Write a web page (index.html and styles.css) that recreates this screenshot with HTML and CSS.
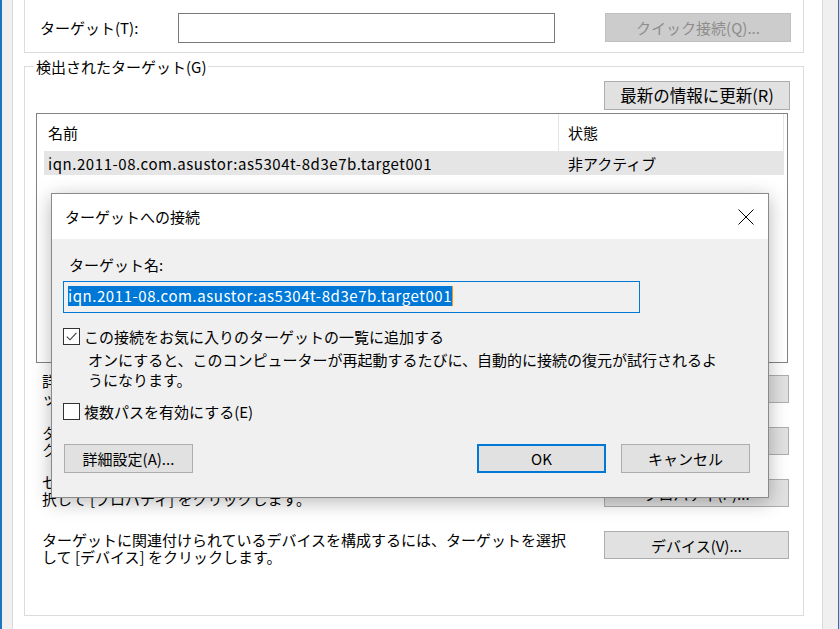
FILE: index.html
```html
<!DOCTYPE html>
<html lang="ja">
<head>
<meta charset="utf-8">
<title>iSCSI イニシエーターのプロパティ</title>
<link rel="stylesheet" href="styles.css">
</head>
<body>
<div class="frame">
  <div class="panel">
    <div class="group group-quick">
      <span class="quick-label">ターゲット(T):</span>
      <div class="textbox quick-input"></div>
      <button class="btn btn-disabled quick-btn">クイック接続(Q)...</button>
    </div>
    <fieldset class="group group-found">
      <legend>検出されたターゲット(G)</legend>
      <div class="found-body">
        <div class="refresh-row"><button class="btn btn-refresh">最新の情報に更新(R)</button></div>
        <div class="listview">
          <div class="lv-header">
            <div class="col col-name">名前</div>
            <div class="col col-state">状態</div>
          </div>
          <div class="lv-row selected">
            <div class="col col-name latin">iqn.2011-08.com.asustor:as5304t-8d3e7b.target001</div>
            <div class="col col-state">非アクティブ</div>
          </div>
        </div>
        <div class="actions">
          <div class="action">
            <p class="action-text">詳細オプションを使用して接続するには、ターゲットを選択して [接続] をクリ<br>ックします。</p>
            <button class="btn btn-action">接続(N)</button>
          </div>
          <div class="action">
            <p class="action-text">ターゲットを完全に切断するには、ターゲットを選択して [切断] を<br>クリックします。</p>
            <button class="btn btn-action">切断(D)</button>
          </div>
          <div class="action action-props">
            <p class="action-text">セッションの構成など、ターゲットのプロパティを表示するには、ターゲットを選<br>択して [プロパティ] をクリックします。</p>
            <button class="btn btn-action">プロパティ(P)...</button>
          </div>
          <div class="action action-devices">
            <p class="action-text">ターゲットに関連付けられているデバイスを構成するには、ターゲットを選択<br>して [デバイス] をクリックします。</p>
            <button class="btn btn-action">デバイス(V)...</button>
          </div>
        </div>
      </div>
    </fieldset>
  </div>
</div>

<div class="dialog">
  <div class="dlg-title">
    <span class="dlg-title-text">ターゲットへの接続</span>
    <svg class="dlg-close" width="16" height="16" viewBox="0 0 16 16" aria-hidden="true">
      <path d="M0.5 0.5 L15.5 15.5 M15.5 0.5 L0.5 15.5" stroke="#000" stroke-width="1" fill="none"/>
    </svg>
  </div>
  <div class="dlg-body">
    <div class="dlg-label">ターゲット名:</div>
    <div class="dlg-input"><span class="selection latin">iqn.2011-08.com.asustor:as5304t-8d3e7b.target001</span></div>
    <div class="check-row check-first">
      <span class="checkbox">
        <svg width="15" height="15" viewBox="0 0 15 15" aria-hidden="true">
          <path d="M2.8 7.6 L6 10.8 L12.4 3.8" stroke="#3a3a3a" stroke-width="1.1" fill="none"/>
        </svg>
      </span>
      <span class="check-label">この接続をお気に入りのターゲットの一覧に追加する</span>
    </div>
    <p class="check-desc">オンにすると、このコンピューターが再起動するたびに、自動的に接続の復元が試行されるよ<br>うになります。</p>
    <div class="check-row check-second">
      <span class="checkbox"></span>
      <span class="check-label">複数パスを有効にする(E)</span>
    </div>
    <div class="dlg-buttons">
      <button class="btn dlg-btn">詳細設定(A)...</button>
      <button class="btn dlg-btn btn-default">OK</button>
      <button class="btn dlg-btn btn-cancel">キャンセル</button>
    </div>
  </div>
</div>
</body>
</html>
```

FILE: styles.css
```css
* {
  box-sizing: border-box;
}

html,
body {
  margin: 0;
  padding: 0;
}

body {
  position: relative;
  width: 839px;
  height: 629px;
  overflow: hidden;
  background: #f0f0f0;
  color: #000;
  font-family: "Noto Sans CJK JP", "Noto Sans", sans-serif;
  font-size: 15px;
  line-height: 17px;
}

.latin {
  letter-spacing: 0.56px;
}

/* window frame */
.frame {
  display: flex;
  height: 629px;
  padding: 0 15px 0 10px;
  background: #f0f0f0;
  border-left: 2px solid #1c76bf;
  border-right: 1px solid #1c76bf;
}

.panel {
  flex: 1;
  padding: 0 18px 0 11px;
  background: #fff;
  border-left: 1px solid #d9d9d9;
  border-right: 1px solid #d9d9d9;
}

/* buttons */
.btn {
  display: flex;
  align-items: center;
  justify-content: center;
  padding: 0;
  margin: 0;
  font: inherit;
  color: #000;
  background: #e1e1e1;
  border: 1px solid #adadad;
  white-space: nowrap;
}

.btn-disabled {
  background: #cccccc;
  border-color: #bfbfbf;
  color: #8d8d8d;
}

/* quick connect group */
.group-quick {
  display: flex;
  align-items: flex-start;
  height: 53px;
  padding: 13px 12px 0 15px;
  border: 1px solid #dcdcdc;
  border-top: none;
}

.quick-label {
  width: 138px;
  line-height: 30px;
  white-space: nowrap;
}

.quick-input {
  width: 377px;
  height: 30px;
  background: #fff;
  border: 1px solid #7a7a7a;
}

.quick-btn {
  width: 186px;
  height: 29px;
  margin-left: auto;
}

/* discovered targets group */
.group-found {
  min-width: 0;
  height: 558px;
  margin: 5px 0 0;
  padding: 0;
  border: 1px solid #dcdcdc;
}

.group-found legend {
  margin-left: 9px;
  padding: 0 2px;
  line-height: 17px;
}

.found-body {
  padding: 6px 13px 0 11px;
}

.refresh-row {
  display: flex;
  justify-content: flex-end;
}

.btn-refresh {
  width: 186px;
  height: 29px;
  font-size: 16.5px;
}

.listview {
  height: 250px;
  margin: 3px 2px 0 0;
  padding: 0 3px 0 7px;
  background: #fff;
  border: 1px solid #828282;
}

.lv-header,
.lv-row {
  display: flex;
}

.lv-header {
  height: 37px;
  align-items: center;
}

.lv-row {
  height: 24px;
  align-items: center;
}

.lv-row.selected {
  background: #e5e5e5;
}

.col {
  white-space: nowrap;
}

.col-name {
  width: 515px;
  padding-left: 4px;
}

.col-state {
  flex: 1;
  padding-left: 9px;
}

.lv-header .col {
  height: 100%;
  display: flex;
  align-items: center;
}

.lv-header .col-name,
.lv-header .col-state {
  border-right: 1px solid #e5e5e5;
}

.actions {
  display: flex;
  flex-direction: column;
  gap: 18px;
  margin-top: 9px;
}

.action {
  display: flex;
  align-items: center;
  height: 34px;
}

.action-text {
  margin: 0;
  padding-left: 6px;
  white-space: nowrap;
  line-height: 17px;
}

.action-props .action-text {
  margin-top: -7px;
}

.action-devices .action-text {
  margin-top: 6px;
}

.btn-action {
  width: 185px;
  height: 28px;
  margin-left: auto;
  margin-right: 1px;
}

/* modal dialog */
.dialog {
  position: absolute;
  left: 51px;
  top: 193px;
  width: 718px;
  height: 305px;
  display: flex;
  flex-direction: column;
  background: #f0f0f0;
  border: 1px solid #8a8a8a;
  box-shadow: 0 4px 18px rgba(0, 0, 0, 0.28);
}

.dlg-title {
  display: flex;
  align-items: center;
  justify-content: space-between;
  height: 45px;
  padding: 0 14px 0 13px;
  background: #fff;
}

.dlg-close {
  display: block;
}

.dlg-body {
  flex: 1;
  padding: 17px 18px 0 11px;
}

.dlg-label {
  padding-left: 6px;
}

.dlg-input {
  width: 577px;
  height: 32px;
  margin-top: 8px;
  padding: 4px 0 0 4px;
  background: #f0f0f0;
  border: 1px solid #0078d7;
}

.selection {
  display: inline-block;
  line-height: 20px;
  color: #fff;
  background: #0078d7;
  border-right: 1px solid #f7931e;
  white-space: nowrap;
}

.check-row {
  display: flex;
  align-items: center;
  height: 17px;
}

.check-first {
  margin-top: 15px;
}

.check-second {
  margin-top: 13px;
}

.checkbox {
  display: flex;
  align-items: center;
  justify-content: center;
  width: 17px;
  height: 17px;
  background: #fff;
  border: 1px solid #333;
}

.check-label {
  margin-left: 4px;
  white-space: nowrap;
}

.check-desc {
  margin: 5px 0 0;
  padding-left: 25px;
  line-height: 20px;
  white-space: nowrap;
}

.dlg-buttons {
  display: flex;
  margin-top: 24px;
}

.dlg-btn {
  width: 129px;
  height: 29px;
}

.dlg-btn:first-child {
  margin-left: 1px;
}

.btn-default {
  margin-left: auto;
  border: 2px solid #0078d7;
}

.btn-cancel {
  margin-left: 15px;
}
```
